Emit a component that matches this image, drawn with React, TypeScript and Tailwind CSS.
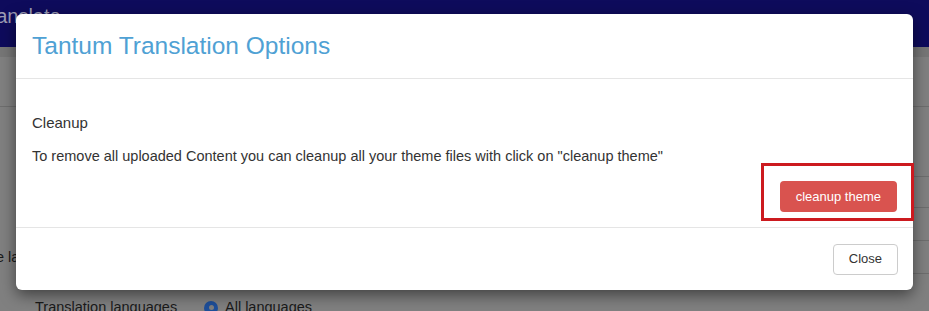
import React from "react";

const font = { fontFamily: '"Liberation Sans", Arial, sans-serif' };

function BackgroundPage() {
  return (
    <div className="flex flex-col h-full">
      <div className="h-[47px] shrink-0 bg-[#0e0b5c] overflow-hidden">
        <div className="-ml-[22px] mt-[1px] text-[20px] text-[#9c9cb4]">Translate</div>
      </div>
      <div className="h-[10px] shrink-0 bg-[#767676]" />
      <div className="h-[50px] shrink-0 border-b border-[#6e6e6e]" />
      <div className="h-[70px] shrink-0 ml-[600px] border-b border-[#6e6e6e]" />
      <div className="h-[31px] shrink-0 ml-[600px] border-b border-[#6e6e6e]" />
      <div className="h-[33px] shrink-0 ml-[600px] border-b border-[#6e6e6e]" />
      <div className="h-[33px] shrink-0 flex items-center text-[14.5px] text-[#1a1a1a]">
        <span className="-ml-[4px] flex-1">e la</span>
        <div className="self-end w-[329px] border-b border-[#6e6e6e]" />
      </div>
      <div className="flex items-center pl-[35px] pt-[23px] text-[14.5px] text-[#1a1a1a]">
        <span className="w-[169px]">Translation languages</span>
        <span className="flex items-center gap-[7px]">
          <span className="w-[14px] h-[14px] rounded-full bg-[#1e4f9a] flex items-center justify-center">
            <span className="w-[5px] h-[5px] rounded-full bg-[#7f7f7f]" />
          </span>
          All languages
        </span>
      </div>
    </div>
  );
}

export default function App() {
  return (
    <div className="relative w-[929px] h-[311px] overflow-hidden bg-[#808080]" style={font}>
      <BackgroundPage />

      <div className="absolute left-[16px] top-[14px] w-[897px] h-[276px] bg-white rounded-[6px] shadow-[0_5px_15px_rgba(0,0,0,0.5)] flex flex-col">
        <div className="h-[65px] shrink-0 border-b border-[#e5e5e5] flex items-center px-[16px]">
          <h4 className="text-[24.5px] text-[#4fa1d4] leading-none">Tantum Translation Options</h4>
        </div>
        <div className="h-[149px] shrink-0 border-b border-[#e5e5e5] px-[16px] pt-[34px] flex flex-col text-[14.5px] text-[#333]">
          <div className="leading-[20px] text-[15px] font-medium">Cleanup</div>
          <p className="leading-[20px] mt-[13px]">
            To remove all uploaded Content you can cleanup all your theme files with click on "cleanup theme"
          </p>
          <div className="flex justify-end mt-[15px]">
            <button className="h-[31px] px-[16px] rounded-[4px] bg-[#d9534f] text-white text-[13px]">
              cleanup theme
            </button>
          </div>
        </div>
        <div className="flex-1 flex items-center justify-end px-[15px]">
          <button className="h-[31px] px-[15px] rounded-[4px] border border-[#cccccc] bg-white text-[13px] text-[#333]">
            Close
          </button>
        </div>
      </div>

      <div className="absolute left-[761px] top-[163px] w-[153px] h-[58px] border-[3px] border-[#cc1a1f]" />
    </div>
  );
}
